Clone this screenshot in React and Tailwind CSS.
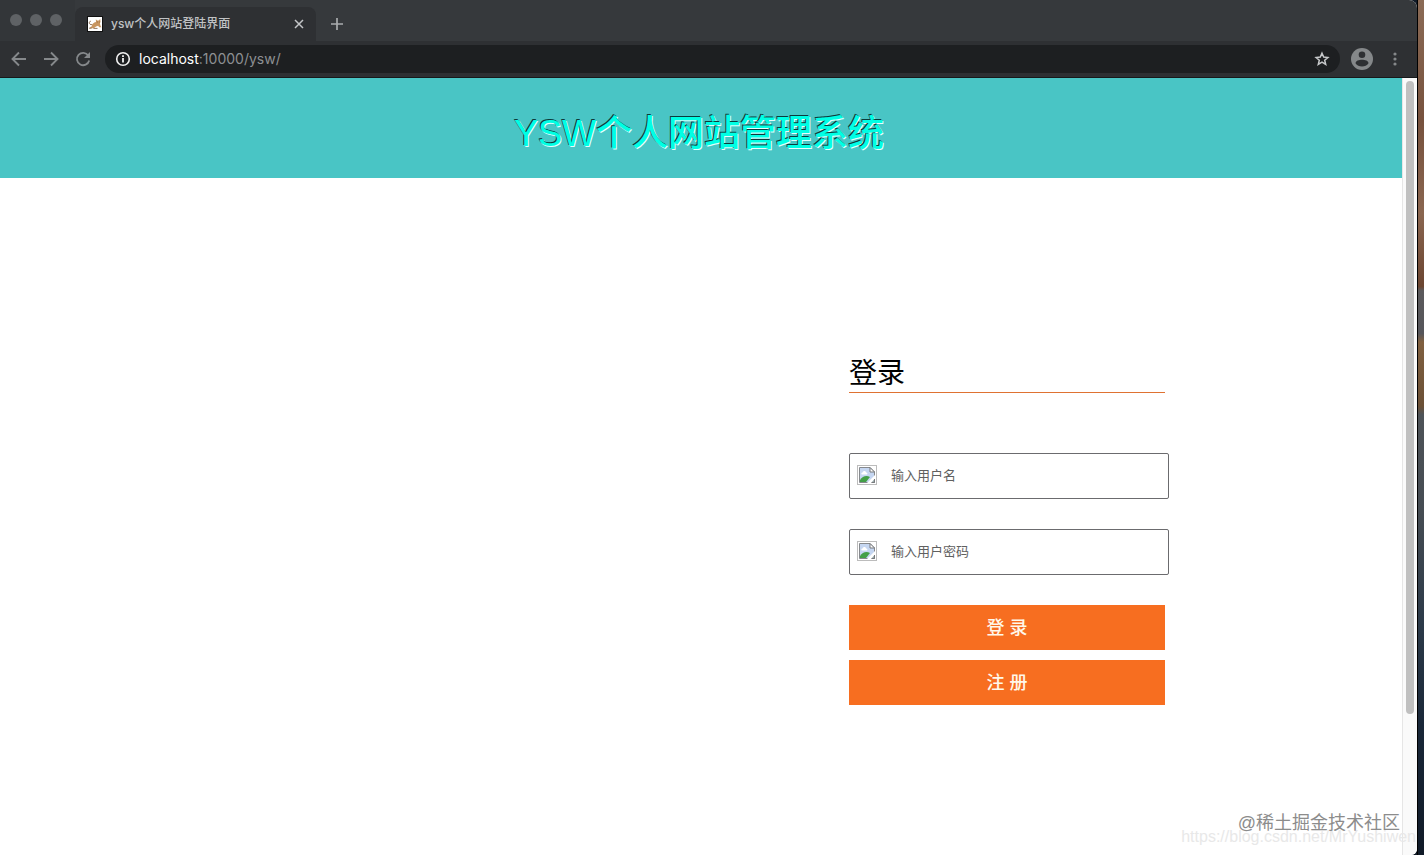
import React, { useState } from "react";

const ICON = "fill-none stroke-current";

function FavIcon() {
  return (
    <svg width="16" height="16" viewBox="0 0 16 16" aria-hidden="true">
      <rect width="16" height="16" fill="#111" />
      <rect x="1" y="1" width="14" height="14" fill="#fff" />
      <path
        d="M8.800 3.200l1.300 1.300h1.700L13.200 3l.3 2.700-.6 1.700.6 2.300 1 1.600h-2.200l-1.200-1.500-2 .6-2.300 1.800H3l.4-1.200 1.200-.6L5.500 8l1.800-1.400 1.700-.5z"
        fill="#c99660"
      />
      <path d="M5.200 8.600C3.400 9 2 7.800 2.300 6.400c.2-.9 1-1.300 1.700-1M2 12.200h2.600M6.500 12.400h4M9.800 6h.9M12 6h.7" fill="none" stroke="#7a5636" strokeWidth="0.800" />
    </svg>
  );
}

function BrokenImage() {
  return (
    <svg className="shrink-0" width="20" height="20" viewBox="0 0 20 20" aria-hidden="true">
      <rect x="0.500" y="0.500" width="19" height="19" fill="#fff" stroke="#bcbcbc" />
      <path d="M2.500 2.500H13L17.500 7v10.500h-15z" fill="#c5d6f1" stroke="#86898d" />
      <path d="M5 9.500c-1 0-1-2 .6-2 .4-2 3.200-2 3.500 0 1.700 0 1.700 2 .5 2z" fill="#fff" />
      <path d="M3 17v-2c2.500-3.500 6-5 10-3L9 17z" fill="#43a047" />
      <path d="M18.500 9.500L9.500 18.500h4.500l4.500-5z" fill="#fff" />
      <path d="M13 2.500V7h4.500z" fill="#fff" stroke="#77797c" />
      <path d="M14.500 17.500h3V14" fill="#9aa" stroke="#77797c" />
    </svg>
  );
}

function TabStrip() {
  return (
    <div className="flex h-[41px] items-end bg-[#36393c]">
      <div className="flex h-[41px] w-[75px] shrink-0 gap-2 bg-[#333639] pt-[14px] pl-[10px]">
        <span className="size-3 rounded-full bg-[#5f6265]" />
        <span className="size-3 rounded-full bg-[#5f6265]" />
        <span className="size-3 rounded-full bg-[#5f6265]" />
      </div>
      <div className="flex h-[34px] w-[241px] items-center rounded-t-lg bg-[#2e3033] pr-[11px] pl-3">
        <FavIcon />
        <span className="ml-2 flex-1 text-xs font-medium text-[#c0c2c4]">ysw个人网站登陆界面</span>
        <button type="button" aria-label="关闭标签页" className="text-[#c4c6c8]">
          <svg className={ICON} width="12" height="12" viewBox="0 0 12 12" strokeWidth="1.500">
            <path d="M2 2l8 8M10 2l-8 8" />
          </svg>
        </button>
      </div>
      <button type="button" aria-label="新标签页" className="mb-[10px] ml-[14px] text-[#a9acae]">
        <svg className={ICON} width="14" height="14" viewBox="0 0 14 14" strokeWidth="1.700">
          <path d="M7 1v12M1 7h12" />
        </svg>
      </button>
    </div>
  );
}

function Toolbar() {
  return (
    <div className="flex h-[37px] items-center border-b border-[#17191b] bg-[#2e3033] pr-5 pl-[11px]">
      <div className="flex gap-4 text-[#85888b]">
        <button type="button" aria-label="后退">
          <svg className={ICON} width="16" height="16" viewBox="0 0 16 16" strokeWidth="1.900">
            <path d="M15 8H2M8 1.500L1.500 8 8 14.500" />
          </svg>
        </button>
        <button type="button" aria-label="前进">
          <svg className={ICON} width="16" height="16" viewBox="0 0 16 16" strokeWidth="1.900">
            <path d="M1 8h13M8 1.500L14.500 8 8 14.500" />
          </svg>
        </button>
        <button type="button" aria-label="重新加载">
          <svg width="16" height="16" viewBox="0 0 16 16">
            <path d="M13.300 4.500A6.200 6.200 0 1 0 14.200 9.500" fill="none" stroke="currentColor" strokeWidth="1.800" />
            <path d="M15 1v6H9z" fill="currentColor" />
          </svg>
        </button>
      </div>
      <div className="ml-[14px] flex h-7 flex-1 items-center rounded-full bg-[#1d1f21] px-[10px]">
        <svg className="text-[#f1f1f1]" width="16" height="16" viewBox="0 0 16 16" aria-hidden="true">
          <circle cx="8" cy="8" r="6.300" fill="none" stroke="currentColor" strokeWidth="1.600" />
          <path d="M7.100 7h1.800v4.500H7.100zM7.100 4.300h1.800V6H7.100z" fill="currentColor" />
        </svg>
        <span className="ml-2 flex-1 text-sm text-[#8d9093]">
          <span className="text-white">localhost</span>:10000/ysw/
        </span>
        <button type="button" aria-label="收藏" className="text-[#c6c8ca]">
          <svg className={ICON} width="16" height="16" viewBox="0 0 16 16" strokeWidth="1.500">
            <path d="M8 2.200l1.700 3.900 4.200.4-3.200 2.800 1 4.100L8 11.200l-3.700 2.200 1-4.100L2.100 6.500l4.200-.4z" />
          </svg>
        </button>
      </div>
      <button type="button" aria-label="用户" className="ml-[11px]">
        <svg width="22" height="22" viewBox="0 0 22 22">
          <circle cx="11" cy="11" r="11" fill="#85888a" />
          <circle cx="11" cy="6.800" r="3.300" fill="#2e3033" />
          <path d="M4.500 15.300c0-2.400 3.500-3.500 6.500-3.500s6.500 1.100 6.500 3.500c-1.500 2.100-3.800 3.200-6.500 3.200s-5-1.100-6.500-3.200z" fill="#2e3033" />
        </svg>
      </button>
      <button type="button" aria-label="菜单" className="ml-5 text-[#85888a]">
        <svg width="4" height="14" viewBox="0 0 4 14" fill="currentColor">
          <circle cx="2" cy="2" r="1.600" />
          <circle cx="2" cy="7" r="1.600" />
          <circle cx="2" cy="12" r="1.600" />
        </svg>
      </button>
    </div>
  );
}

function Field({ label, type, value, onChange }) {
  return (
    <label className="flex h-[46px] w-80 items-center rounded-xs border border-[#6b6b6e] bg-white pb-[2px] pl-[7px]">
      <BrokenImage />
      <input
        type={type}
        aria-label={label}
        placeholder={label}
        value={value}
        onChange={(e) => onChange(e.target.value)}
        className="ml-[14px] min-w-0 flex-1 pt-[2px] text-[13px] outline-none placeholder:text-[#606060]"
      />
    </label>
  );
}

function LoginForm() {
  const [name, setName] = useState("");
  const [password, setPassword] = useState("");

  return (
    <form className="w-[316px]" onSubmit={(e) => e.preventDefault()}>
      <h2 className="mb-[60px] border-b border-[#df7232] pt-1 text-[28px] leading-9 text-black">登录</h2>
      <div className="flex flex-col gap-[30px]">
        <Field label="输入用户名" type="text" value={name} onChange={setName} />
        <Field label="输入用户密码" type="password" value={password} onChange={setPassword} />
        <div className="flex flex-col gap-[10px]">
          <button type="submit" className="h-[45px] bg-[#f76e20] text-lg font-medium text-[#fff8ea]">
            登 录
          </button>
          <button type="button" className="h-[45px] bg-[#f76e20] text-lg font-medium text-[#fff8ea]">
            注 册
          </button>
        </div>
      </div>
    </form>
  );
}

function Desktop() {
  return (
    <div className="w-[7px] shrink-0 border-l border-black bg-[linear-gradient(to_bottom,#8b6b56_0%,#77523e_14%,#8a6650_25%,#6b4531_33.5%,#5b5a5c_34%,#55555a_39%,#806040_40%,#6b5036_47.5%,#4e5358_48.5%,#454c53_60%,#2c3a49_73%,#192738_85%,#101a27_100%)]" />
  );
}

function App() {
  return (
    <div className="relative flex min-h-screen overflow-hidden bg-[#101a27] font-['Liberation_Sans','Noto_Sans_CJK_SC',sans-serif]">
      <div className="flex flex-1 flex-col overflow-hidden rounded-tr-lg rounded-br-md bg-white">
        <div className="font-[Inter,'Noto_Sans_CJK_SC',sans-serif]">
          <TabStrip />
          <Toolbar />
        </div>
        <div className="flex flex-1">
          <main className="flex-1">
            <header className="flex h-[100px] items-center justify-center bg-[#49c5c5] pt-3 pr-1">
              <h1 className="text-4xl font-medium text-[#00ffe4] [text-shadow:-1px_-1px_#0b3b3b,1px_1px_#e4ffff]">
                YSW个人网站管理系统
              </h1>
            </header>
            <div className="grid grid-cols-2 pt-[174px]">
              <div className="col-start-2 pl-[148px]">
                <LoginForm />
              </div>
            </div>
          </main>
          <div className="flex w-[15px] justify-center border-l border-[#e6e6e6] bg-[#fafafa] pt-[3px]">
            <div className="h-9/11 w-2 rounded-full bg-[#c0c0c0]" />
          </div>
        </div>
      </div>
      <Desktop />
      <div className="absolute right-2 bottom-2 text-base leading-5 text-[#e8e8e8]">
        https://blog.csdn.net/MrYushiwen
      </div>
      <div className="absolute right-6 bottom-5 text-lg leading-6 text-[#8c8c8c]">@稀土掘金技术社区</div>
    </div>
  );
}

export default App;
